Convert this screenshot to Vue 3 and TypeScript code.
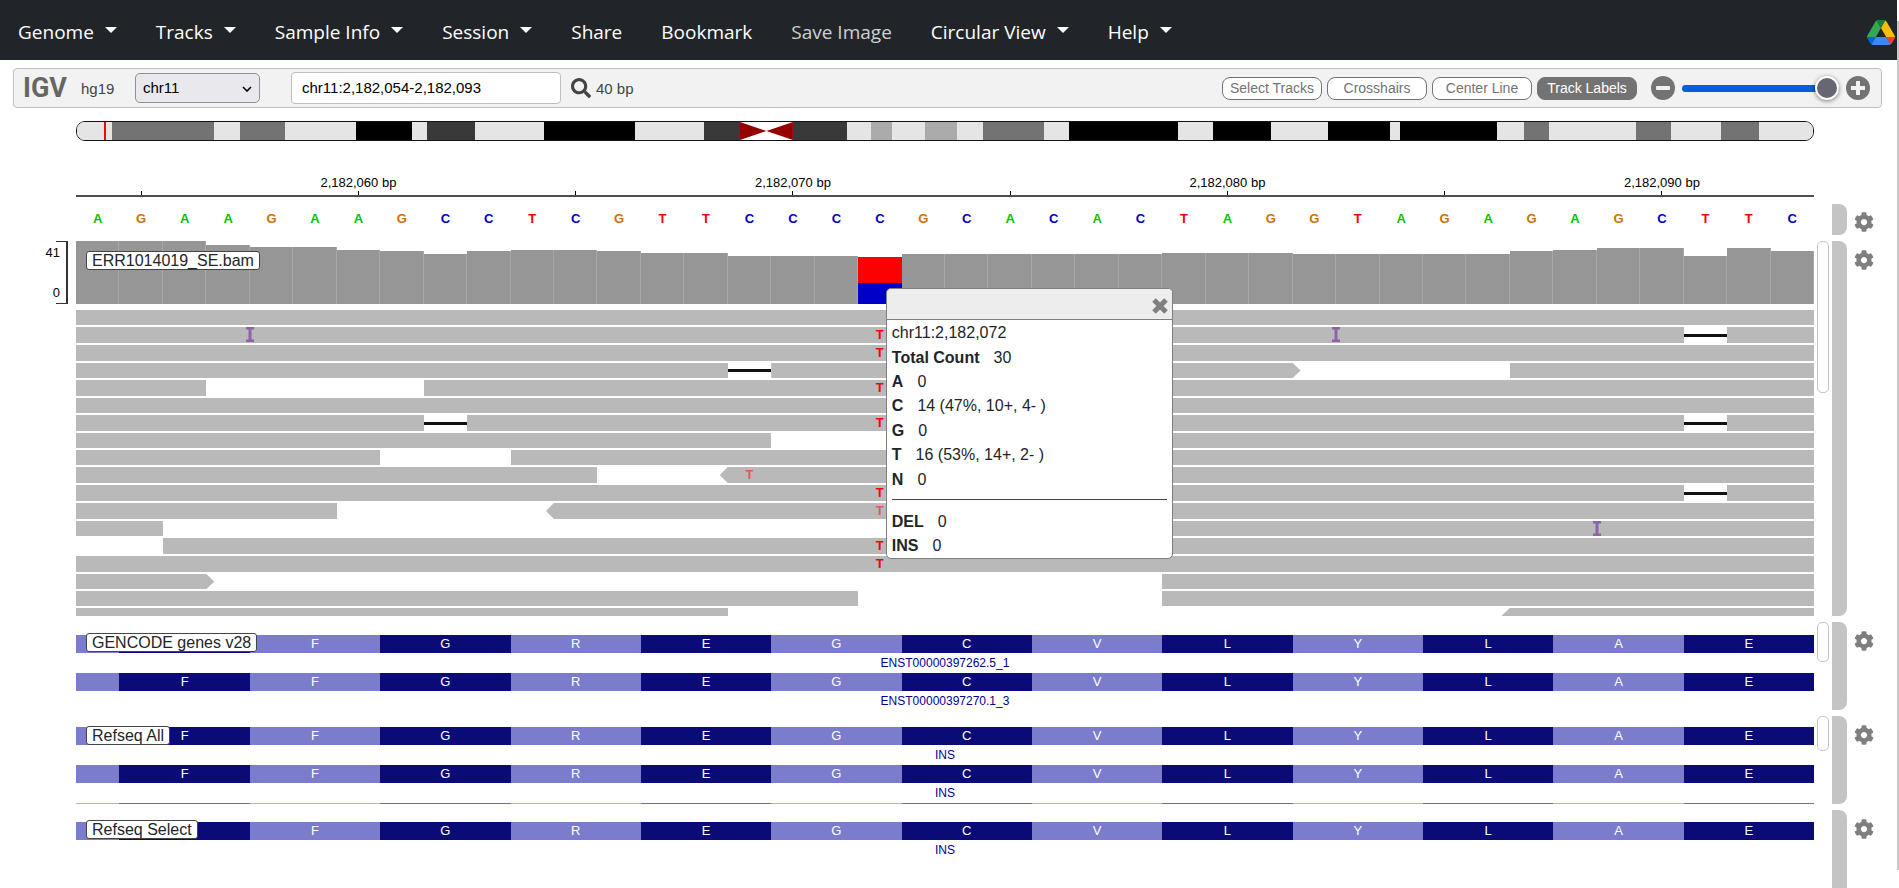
<script setup lang="ts">
import { ref } from 'vue'

interface MenuItem { label: string; caret?: boolean; muted?: boolean }
interface Segment { from: number; to: number; head?: 'left' | 'right' }
interface Mark { at: number; faint?: boolean }
interface ReadRow { segments: Segment[]; deletions?: number[]; insertions?: number[]; mismatches?: Mark[] }
interface GeneTrack { name: string; title: string; labels: string[]; coversFirst: boolean; partial: boolean; thumb: string }

const menu: MenuItem[] = [
  { label: 'Genome', caret: true },
  { label: 'Tracks', caret: true },
  { label: 'Sample Info', caret: true },
  { label: 'Session', caret: true },
  { label: 'Share' },
  { label: 'Bookmark' },
  { label: 'Save Image', muted: true },
  { label: 'Circular View', caret: true },
  { label: 'Help', caret: true },
]

const locus = ref('chr11:2,182,054-2,182,093')
const chromosome = ref('chr11')
const zoomLevel = ref(100)
const toggles = [
  { label: 'Select Tracks', on: false },
  { label: 'Crosshairs', on: false },
  { label: 'Center Line', on: false },
  { label: 'Track Labels', on: true },
]

// Cytobands: [relative length, stain]
const bands: [number, string][] = [
  [35, 'neg'], [102, 'p50'], [26, 'neg'], [45, 'p50'], [71, 'neg'], [56, 'p100'], [15, 'neg'],
  [48, 'p75'], [70, 'neg'], [91, 'p100'], [69, 'neg'], [36, 'p75'], [53, 'cen'], [54, 'p75'],
  [24, 'neg'], [21, 'p25'], [33, 'neg'], [32, 'p25'], [26, 'neg'], [61, 'p50'], [25, 'neg'],
  [109, 'p100'], [35, 'neg'], [58, 'p100'], [57, 'neg'], [63, 'p100'], [10, 'neg'], [97, 'p100'],
  [27, 'neg'], [25, 'p50'], [87, 'neg'], [35, 'p50'], [50, 'neg'], [38, 'p50'], [54, 'neg'],
]

const ticks = [1, 6, 11, 16, 21, 26, 31, 36].map((base) => ({
  base,
  label: base % 10 === 6 ? `2,182,0${54 + base} bp` : '',
}))

const sequence = 'AGAAGAAGCCTCGTTCCCCGCACACTAGGTAGAGAGCTTC'.split('')

const depth = [
  63, 63, 63, 59, 57, 57, 54, 53, 50, 53, 54, 54, 53, 51, 51, 48, 48, 48, 47, 50,
  50, 50, 50, 50, 50, 51, 51, 51, 50, 50, 50, 50, 50, 53, 54, 56, 56, 48, 56, 53,
]
const variantBase = 18

const whole: Segment[] = [{ from: 0, to: 40 }]
const here: Mark[] = [{ at: 18 }]
const reads: ReadRow[] = [
  { segments: whole },
  { segments: [{ from: 0, to: 37 }, { from: 38, to: 40 }], deletions: [37], insertions: [4, 29], mismatches: here },
  { segments: whole, mismatches: here },
  { segments: [{ from: 0, to: 15 }, { from: 16, to: 28, head: 'right' }, { from: 33, to: 40 }], deletions: [15] },
  { segments: [{ from: 0, to: 3 }, { from: 8, to: 40 }], mismatches: here },
  { segments: whole },
  { segments: [{ from: 0, to: 8 }, { from: 9, to: 37 }, { from: 38, to: 40 }], deletions: [8, 37], mismatches: here },
  { segments: [{ from: 0, to: 16 }, { from: 20, to: 40 }] },
  { segments: [{ from: 0, to: 7 }, { from: 10, to: 40 }] },
  { segments: [{ from: 0, to: 12 }, { from: 15, to: 40, head: 'left' }], mismatches: [{ at: 15, faint: true }] },
  { segments: [{ from: 0, to: 37 }, { from: 38, to: 40 }], deletions: [37], mismatches: here },
  { segments: [{ from: 0, to: 6 }, { from: 11, to: 40, head: 'left' }], mismatches: [{ at: 18, faint: true }] },
  { segments: [{ from: 0, to: 2 }, { from: 20, to: 40 }], insertions: [35] },
  { segments: [{ from: 2, to: 40 }], mismatches: here },
  { segments: whole, mismatches: here },
  { segments: [{ from: 0, to: 3, head: 'right' }, { from: 25, to: 40 }] },
  { segments: [{ from: 0, to: 18 }, { from: 25, to: 40 }] },
  { segments: [{ from: 0, to: 15 }, { from: 33, to: 40, head: 'left' }] },
]

const aminoAcids = 'FFGREGCVLYLAE'.split('')
const geneTracks: GeneTrack[] = [
  { name: 'gencode', title: 'GENCODE genes v28', labels: ['ENST00000397262.5_1', 'ENST00000397270.1_3'], coversFirst: true, partial: false, thumb: 'thumb-gene' },
  { name: 'refseq-all', title: 'Refseq All', labels: ['INS', 'INS'], coversFirst: false, partial: true, thumb: 'thumb-refseq' },
  { name: 'refseq-select', title: 'Refseq Select', labels: ['INS'], coversFirst: true, partial: false, thumb: '' },
]

const counts = [
  { key: 'Total Count', value: '30' },
  { key: 'A', value: '0' },
  { key: 'C', value: '14 (47%, 10+, 4- )' },
  { key: 'G', value: '0' },
  { key: 'T', value: '16 (53%, 14+, 2- )' },
  { key: 'N', value: '0' },
]
const indels = [{ key: 'DEL', value: '0' }, { key: 'INS', value: '0' }]
const popupOpen = ref(true)

const gear = 'M487.4 315.7l-42.6-24.6c4.3-23.2 4.3-47 0-70.2l42.6-24.6c4.9-2.8 7.1-8.6 5.5-14-11.1-35.6-30-67.8-54.7-94.6-3.8-4.1-10-5.1-14.8-2.3L380.8 110c-17.9-15.4-38.5-27.3-60.8-35.1V25.8c0-5.6-3.9-10.5-9.4-11.7-36.7-8.2-74.3-7.8-109.2 0-5.5 1.2-9.4 6.1-9.4 11.7V75c-22.2 7.9-42.8 19.8-60.8 35.1L88.7 85.5c-4.9-2.8-11-1.9-14.8 2.3-24.7 26.7-43.6 58.9-54.7 94.6-1.7 5.4.6 11.2 5.5 14L67.3 221c-4.3 23.2-4.3 47 0 70.2l-42.6 24.6c-4.9 2.8-7.1 8.6-5.5 14 11.1 35.6 30 67.8 54.7 94.6 3.8 4.1 10 5.1 14.8 2.3l42.6-24.6c17.9 15.4 38.5 27.3 60.8 35.1v49.2c0 5.6 3.9 10.5 9.4 11.7 36.7 8.2 74.3 7.8 109.2 0 5.5-1.2 9.4-6.1 9.4-11.7v-49.2c22.2-7.9 42.8-19.8 60.8-35.1l42.6 24.6c4.9 2.8 11 1.9 14.8-2.3 24.7-26.7 43.6-58.9 54.7-94.6 1.5-5.5-.7-11.3-5.6-14.1zM256 336c-44.1 0-80-35.9-80-80s35.9-80 80-80 80 35.9 80 80-35.9 80-80 80z'

function span(from: number, to: number) {
  return { gridColumn: `${from + 1} / ${to + 1}` }
}

// The track title lies over the first codon, so its letter is left out there.
function codonLetter(track: GeneTrack, row: number, index: number) {
  return track.coversFirst && row === 0 && index === 0 ? '' : aminoAcids[index]
}
</script>

<template>
  <div class="app">
    <nav class="navbar">
      <ul class="menu">
        <li v-for="item in menu" :key="item.label">
          <a href="#" class="menu-link" :class="{ muted: item.muted }">
            {{ item.label }}<span v-if="item.caret" class="caret"></span>
          </a>
        </li>
      </ul>
      <a href="#" class="drive" aria-label="Google Drive">
        <svg viewBox="0 0 87.3 78" width="28" height="25">
          <path fill="#0066da" d="m6.6 66.85 3.85 6.65c.8 1.4 1.95 2.5 3.3 3.3l13.75-23.8h-27.5c0 1.55.4 3.1 1.2 4.5z" />
          <path fill="#34a853" d="m43.65 25-13.75-23.8c-1.35.8-2.5 1.9-3.3 3.3l-25.4 44a9.06 9.06 0 0 0 -1.2 4.5h27.5z" />
          <path fill="#ea4335" d="m73.55 76.8c1.35-.8 2.5-1.9 3.3-3.3l1.6-2.75 7.65-13.25c.8-1.4 1.2-2.95 1.2-4.5h-27.502l5.852 11.5z" />
          <path fill="#188038" d="m43.65 25 13.75-23.8c-1.35-.8-2.9-1.2-4.5-1.2h-18.5c-1.6 0-3.15.45-4.5 1.2z" />
          <path fill="#4285f4" d="m59.8 53h-32.3l-13.75 23.8c1.35.8 2.9 1.2 4.5 1.2h50.8c1.6 0 3.15-.45 4.5-1.2z" />
          <path fill="#fbbc04" d="m73.4 26.5-12.7-22c-.8-1.4-1.95-2.5-3.3-3.3l-13.75 23.8 16.15 28h27.45c0-1.55-.4-3.1-1.2-4.5z" />
        </svg>
      </a>
    </nav>

    <header class="toolbar">
      <span class="logo">IGV</span>
      <span class="genome">hg19</span>
      <div class="chrom">
        <select v-model="chromosome" aria-label="Chromosome">
          <option>chr11</option>
        </select>
        <svg class="chevron" viewBox="0 0 10 6" width="10" height="6">
          <path d="M1 1l4 4 4-4" fill="none" stroke="#000" stroke-width="1.6" />
        </svg>
      </div>
      <input v-model="locus" class="locus" type="text" aria-label="Locus" />
      <button class="icon-button search" aria-label="Search">
        <svg viewBox="0 0 512 512" width="20" height="20" fill="#444">
          <path d="M505 442.7L405.3 343c-4.5-4.5-10.6-7-17-7H372c27.6-35.3 44-79.7 44-128C416 93.1 322.9 0 208 0S0 93.1 0 208s93.1 208 208 208c48.3 0 92.7-16.4 128-44v16.3c0 6.4 2.5 12.5 7 17l99.7 99.7c9.4 9.4 24.6 9.4 33.9 0l28.3-28.3c9.4-9.4 9.4-24.6.1-34zM208 336c-70.7 0-128-57.2-128-128 0-70.7 57.2-128 128-128 70.7 0 128 57.2 128 128 0 70.7-57.2 128-128 128z" />
        </svg>
      </button>
      <span class="size">40 bp</span>
      <div class="toggles">
        <button v-for="t in toggles" :key="t.label" class="toggle" :class="{ on: t.on }" :aria-pressed="t.on">{{ t.label }}</button>
      </div>
      <div class="zoom">
        <button class="icon-button" aria-label="Zoom out">
          <svg viewBox="0 0 24 24" width="24" height="24">
            <circle cx="12" cy="12" r="12" fill="#737373" /><rect x="5" y="10" width="14" height="4" rx="1" fill="#f2f2f2" />
          </svg>
        </button>
        <input v-model="zoomLevel" class="slider" type="range" min="0" max="100" aria-label="Zoom" />
        <button class="icon-button" aria-label="Zoom in">
          <svg viewBox="0 0 24 24" width="24" height="24">
            <circle cx="12" cy="12" r="12" fill="#737373" />
            <path d="M10 5h4v5h5v4h-5v5h-4v-5H5v-4h5z" fill="#f2f2f2" />
          </svg>
        </button>
      </div>
    </header>

    <main class="browser">
      <div class="ideogram">
        <span v-for="(b, i) in bands" :key="i" class="band" :class="b[1]" :style="{ flexGrow: b[0] }">
          <svg v-if="b[1] === 'cen'" viewBox="0 0 52 18" preserveAspectRatio="none">
            <path d="M0 0L26 9L0 18zM52 0L26 9L52 18z" fill="#960000" />
          </svg>
        </span>
        <span class="locus-mark"></span>
      </div>

      <div class="ruler bases">
        <div v-for="t in ticks" :key="t.base" class="tick" :style="span(t.base, t.base + 1)">
          <span class="tick-label">{{ t.label }}</span>
          <span class="tick-line"></span>
        </div>
      </div>

      <section class="track track-sequence">
        <div class="view bases sequence">
          <span v-for="(n, i) in sequence" :key="i" class="nucleotide" :class="n">{{ n }}</span>
        </div>
        <div class="drag"></div>
        <button class="gear" aria-label="Sequence settings"><svg viewBox="0 0 512 512"><path :d="gear" /></svg></button>
      </section>

      <section class="track track-bam">
        <div class="axis"><div class="axis-scale"><span>41</span><span>0</span></div></div>
        <div class="view">
          <div class="coverage bases">
            <div v-for="(d, i) in depth" :key="i" class="bar" :class="{ variant: i === variantBase }" :style="{ height: d + 'px' }"></div>
          </div>
          <div class="alignments">
            <div class="reads">
              <div v-for="(row, r) in reads" :key="r" class="read-row bases">
                <div v-for="(s, i) in row.segments" :key="'s' + i" class="read" :class="s.head && 'head-' + s.head" :style="span(s.from, s.to)"></div>
                <div v-for="d in row.deletions" :key="'d' + d" class="deletion" :style="span(d, d + 1)"></div>
                <svg v-for="n in row.insertions" :key="'i' + n" class="insertion" viewBox="0 0 8 15" :style="span(n, n + 1)">
                  <path d="M0 0h8v2.5H5.5v10H8V15H0v-2.5h2.5v-10H0z" fill="#8e62a8" />
                </svg>
                <span v-for="m in row.mismatches" :key="'m' + m.at" class="mismatch" :class="{ faint: m.faint }" :style="span(m.at, m.at + 1)">T</span>
              </div>
            </div>
          </div>
          <span class="track-label">ERR1014019_SE.bam</span>
          <div v-if="popupOpen" class="popup" role="dialog" aria-label="Position details">
            <div class="popup-header">
              <button class="close" aria-label="Close" @click="popupOpen = false">
                <svg viewBox="0 0 16 16" width="16" height="16"><path d="M2 2L14 14M14 2L2 14" stroke="#7f7f7f" stroke-width="5" /></svg>
              </button>
            </div>
            <div class="popup-body">
              <div class="counts">
                <div>chr11:2,182,072</div>
                <div v-for="c in counts" :key="c.key"><b>{{ c.key }}</b>{{ c.value }}</div>
              </div>
              <hr />
              <div v-for="c in indels" :key="c.key" class="indel"><b>{{ c.key }}</b>{{ c.value }}</div>
            </div>
          </div>
        </div>
        <div class="scroll"><div class="thumb thumb-bam"></div></div>
        <div class="drag"></div>
        <button class="gear" aria-label="Alignment settings"><svg viewBox="0 0 512 512"><path :d="gear" /></svg></button>
      </section>

      <section v-for="t in geneTracks" :key="t.name" class="track" :class="'track-' + t.name">
        <div class="view genes">
          <div v-for="(label, i) in t.labels" :key="i" class="transcript">
            <div class="exon bases">
              <span class="codon" :style="span(0, 1)"></span>
              <span v-for="(a, k) in aminoAcids" :key="k" class="codon" :class="{ dark: k % 2 === 0 }" :style="span(k * 3 + 1, k * 3 + 4)">{{ codonLetter(t, i, k) }}</span>
            </div>
            <div class="transcript-name">{{ label }}</div>
          </div>
          <div v-if="t.partial" class="exon bases edge">
            <span class="codon" :style="span(0, 1)"></span>
            <span v-for="(a, k) in aminoAcids" :key="k" class="codon" :class="{ dark: k % 2 === 0 }" :style="span(k * 3 + 1, k * 3 + 4)"></span>
          </div>
          <span class="track-label">{{ t.title }}</span>
        </div>
        <div class="scroll"><div v-if="t.thumb" class="thumb" :class="t.thumb"></div></div>
        <div class="drag"></div>
        <button class="gear" :aria-label="t.title + ' settings'"><svg viewBox="0 0 512 512"><path :d="gear" /></svg></button>
      </section>
    </main>
    <div class="page-scroll"></div>
  </div>
</template>

<style>
body {
  background: #fff;
  overflow: hidden;
}
</style>

<style scoped>
.app {
  display: flex;
  flex-direction: column;
  height: 100vh;
  padding-right: 2px;
  box-sizing: border-box;
  overflow: hidden;
  font-family: "Liberation Sans", Arial, sans-serif;
  color: #212529;
}
button {
  font-family: inherit;
  cursor: pointer;
}
.navbar {
  display: flex;
  align-items: center;
  justify-content: space-between;
  flex: none;
  height: 60px;
  padding: 4px 2px 0 18px;
  box-sizing: border-box;
  background: #212529;
}
.menu {
  display: flex;
  gap: 39px;
  margin: 0;
  padding: 0;
  list-style: none;
}
.menu-link {
  display: flex;
  align-items: center;
  font: 19px/30px "Open Sans", "Noto Sans", sans-serif;
  color: #fff;
  text-decoration: none;
  white-space: nowrap;
}
.menu-link.muted {
  color: #ced0d2;
}
.caret {
  margin: 0 0 4px 11px;
  border: 6px solid transparent;
  border-top-color: #fff;
  border-bottom: 0;
}
.drive,
.drive svg {
  display: block;
}
.toolbar {
  display: flex;
  align-items: center;
  flex: none;
  height: 40px;
  margin: 8px 15px 13px 13px;
  padding: 0 11px 0 9px;
  box-sizing: border-box;
  border: 1px solid #bfbfbf;
  border-radius: 4px;
  background: #f2f2f2;
  font-size: 15px;
  color: #444;
}
.logo {
  width: 58px;
  font: 700 27px/32px Roboto, sans-serif;
  color: #666;
}
.genome {
  width: 54px;
}
.chrom {
  position: relative;
  width: 125px;
  margin-right: 31px;
}
.chrom select {
  display: block;
  width: 100%;
  height: 30px;
  padding: 0 7px 2px;
  border: 1px solid #8f8f9d;
  border-radius: 5px;
  background: #e9e9ed;
  appearance: none;
  font: 15px "Liberation Sans", Arial, sans-serif;
  color: #000;
}
.chevron {
  position: absolute;
  right: 8px;
  top: 13px;
  pointer-events: none;
}
.locus {
  width: 270px;
  height: 32px;
  padding: 0 10px 2px;
  box-sizing: border-box;
  border: 1px solid #bfbfbf;
  border-radius: 4px;
  background: #fff;
  font: 15px "Liberation Sans", Arial, sans-serif;
  color: #000;
}
.icon-button {
  display: block;
  flex: none;
  padding: 0;
  border: 0;
  background: none;
}
.icon-button svg {
  display: block;
}
.search {
  margin: 0 5px 0 10px;
}
.toggles {
  display: flex;
  gap: 5px;
  margin-left: auto;
}
.toggle {
  width: 100px;
  height: 23px;
  padding: 0;
  border: 1px solid #737373;
  border-radius: 8px;
  background: #fff;
  font-size: 14px;
  line-height: 21px;
  color: #737373;
  white-space: nowrap;
}
.toggle.on {
  background: #737373;
  color: #fff;
}
.zoom {
  display: flex;
  align-items: center;
  gap: 7px;
  margin-left: 14px;
}
.slider {
  width: 157px;
  height: 26px;
  margin: 0;
  background: transparent;
  appearance: none;
}
.slider::-webkit-slider-runnable-track {
  height: 7px;
  border-radius: 4px;
  background: #0060df;
}
.slider::-webkit-slider-thumb {
  width: 24px;
  height: 24px;
  margin-top: -9px;
  box-sizing: border-box;
  border: 2px solid #fff;
  border-radius: 50%;
  background: #676774;
  box-shadow: 0 1px 4px rgba(0, 0, 0, 0.5);
  appearance: none;
}
.browser {
  display: flex;
  flex-direction: column;
  flex: 1;
  min-height: 0;
}
.ideogram {
  position: relative;
  display: flex;
  flex: none;
  height: 20px;
  margin: 0 83px 34px 76px;
  box-sizing: border-box;
  border: 1px solid #111;
  border-radius: 9px;
  overflow: hidden;
}
.band {
  flex: 0 1 0;
  background: #e5e5e5;
}
.band svg {
  display: block;
  width: 100%;
  height: 100%;
}
.p25 { background: #ababab; }
.p50 { background: #737373; }
.p75 { background: #393939; }
.p100 { background: #000; }
.cen { background: #fff; }
.locus-mark {
  position: absolute;
  left: 27px;
  top: 0;
  bottom: 0;
  width: 2px;
  background: #f00;
}
.bases {
  display: grid;
  grid-template-columns: repeat(40, minmax(0, 1fr));
}
.ruler {
  flex: none;
  margin: 0 83px 7px 76px;
  border-bottom: 2px solid #4d4d4d;
}
.tick {
  display: flex;
  flex-direction: column;
  align-items: center;
}
.tick-label {
  height: 16px;
  font-size: 13px;
  line-height: 16px;
  color: #000;
  white-space: nowrap;
}
.tick-line {
  width: 1px;
  height: 4px;
  background: #000;
}
.track {
  display: grid;
  grid-template-columns: 76px minmax(0, 1fr) 18px 15px 50px;
  flex: none;
  margin-bottom: 6px;
}
.axis { grid-column: 1; }
.view {
  grid-column: 2;
  position: relative;
  min-width: 0;
}
.scroll {
  grid-column: 3;
  padding-left: 3px;
}
.drag {
  grid-column: 4;
  border-radius: 0 8px 8px 0;
  background: #c4c4c4;
}
.gear {
  grid-column: 5;
  align-self: start;
  width: 20px;
  height: 20px;
  margin: 9px 0 0 7px;
  padding: 0;
  border: 0;
  background: none;
}
.gear svg {
  display: block;
  width: 20px;
  height: 20px;
  fill: #7f7f7f;
}
.track-sequence { height: 31px; }
.track-sequence .gear { margin-top: 8px; }
.track-bam { height: 375px; }
.track-gencode,
.track-refseq-all { height: 88px; }
.track-refseq-select {
  flex: 1;
  margin-bottom: 0;
}
.track-refseq-select .drag {
  border-bottom-right-radius: 0;
}
.sequence {
  align-items: center;
  padding-bottom: 2px;
}
.nucleotide {
  font-size: 13px;
  font-weight: 700;
  text-align: center;
}
.A { color: #00c800; }
.C { color: #0000c8; }
.G { color: #d17105; }
.T { color: #f00; }
.axis-scale {
  display: flex;
  flex-direction: column;
  justify-content: space-between;
  align-items: flex-end;
  width: 12px;
  height: 63px;
  margin-left: 56px;
  padding: 3px 6px 2px 0;
  box-sizing: border-box;
  border: 2px solid #333;
  border-width: 1px 2px 1px 0;
  font-size: 13px;
  line-height: 16px;
  color: #000;
}
.coverage {
  height: 63px;
  align-items: end;
}
.bar {
  background: #969696;
  border-right: 1px solid #a8a8a8;
}
.bar.variant {
  border: 0;
  background: linear-gradient(#f00 0 26px, #0000c8 26px);
}
.alignments {
  height: 306px;
  padding-top: 6px;
  overflow: hidden;
}
.reads {
  display: grid;
  grid-template-rows: repeat(18, 1fr);
  row-gap: 2px;
  height: 313px;
}
.read-row > * {
  grid-row: 1;
}
.read {
  background: #b9b9b9;
}
.head-right {
  margin-right: -8px;
  clip-path: polygon(0 0, calc(100% - 8px) 0, 100% 50%, calc(100% - 8px) 100%, 0 100%);
}
.head-left {
  margin-left: -8px;
  clip-path: polygon(8px 0, 100% 0, 100% 100%, 8px 100%, 0 50%);
}
.deletion {
  align-self: center;
  height: 3px;
  background: #111;
}
.insertion {
  width: 8px;
  height: 15px;
  margin-left: -4px;
}
.mismatch {
  z-index: 1;
  font-size: 13px;
  font-weight: 700;
  line-height: 16px;
  text-align: center;
  color: #f00;
}
.mismatch.faint {
  color: #dd5c5c;
}
.track-label {
  position: absolute;
  left: 10px;
  top: 10px;
  padding: 0 5px;
  border: 1px solid #444;
  border-radius: 3px;
  background: #fff;
  font-size: 16px;
  line-height: 17px;
  white-space: nowrap;
}
.thumb {
  width: 12px;
  box-sizing: border-box;
  border: 1px solid #c4c4c4;
  border-radius: 5px;
  background: #fff;
}
.thumb-bam { height: 152px; }
.thumb-gene { height: 40px; }
.thumb-refseq { height: 35px; }
.genes {
  padding-top: 12px;
  overflow: hidden;
}
.track-gencode .genes { padding-top: 13px; }
.track-gencode .track-label { top: 11px; }
.track-refseq-all .genes { padding-top: 11px; }
.exon {
  height: 18px;
}
.exon.edge {
  opacity: 0.6;
}
.codon {
  background: #7c7ccd;
  font-size: 13px;
  line-height: 17px;
  text-align: center;
  color: #fff;
}
.codon.dark {
  background: #0b0b78;
}
.transcript-name {
  font-size: 12px;
  line-height: 20px;
  text-align: center;
  color: #000096;
}
.popup {
  position: absolute;
  left: calc(46.25% + 6px);
  top: 47px;
  z-index: 2;
  width: 287px;
  box-sizing: border-box;
  border: 1px solid #7f7f7f;
  border-radius: 5px;
  background: #fff;
  font-size: 16px;
}
.popup-header {
  display: flex;
  justify-content: flex-end;
  align-items: center;
  height: 30px;
  padding-right: 4px;
  border-bottom: 1px solid #7f7f7f;
  border-radius: 4px 4px 0 0;
  background: #ededed;
}
.close {
  padding: 4px 0 0;
  border: 0;
  background: none;
}
.close svg {
  display: block;
}
.popup-body {
  padding: 1px 5px 0;
}
.counts {
  display: grid;
  grid-auto-rows: 1fr;
  align-items: center;
  height: 171px;
}
.popup b {
  margin-right: 14px;
}
.popup hr {
  margin: 7px 0 10px;
  border: 0;
  border-top: 1px solid #444;
}
.indel {
  line-height: 24px;
}
.page-scroll {
  position: fixed;
  top: 21px;
  right: 0;
  width: 2px;
  height: calc(100vh - 39px);
  background: #c8c8c8;
}
</style>
